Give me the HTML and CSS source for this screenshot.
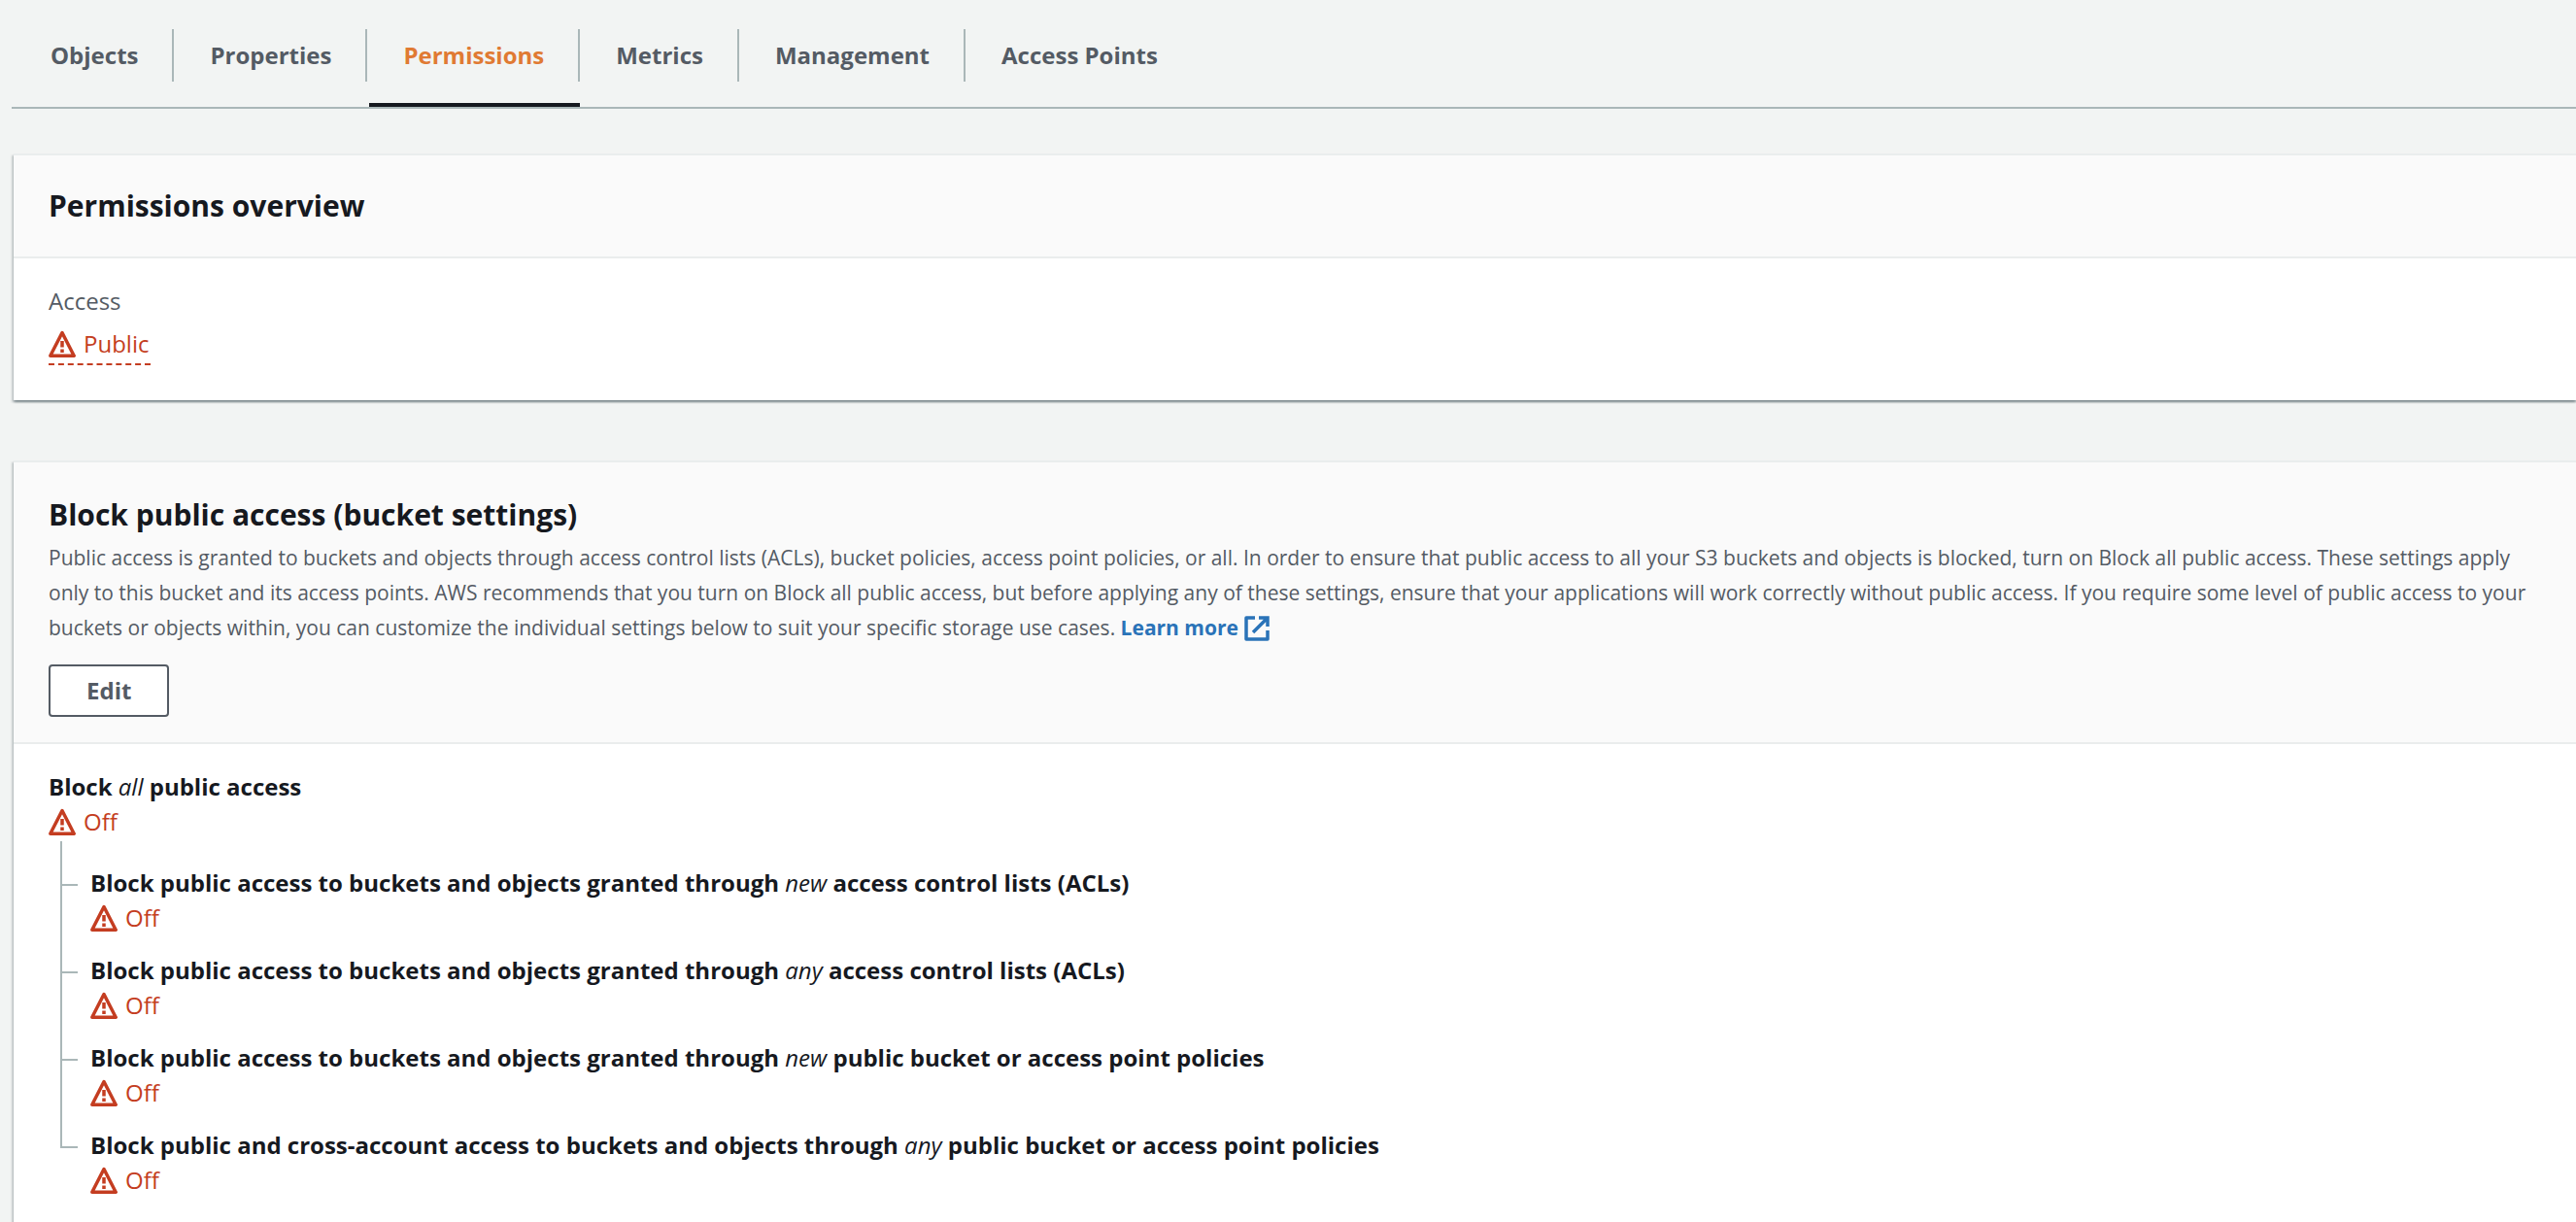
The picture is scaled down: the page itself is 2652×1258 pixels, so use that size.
FILE: index.html
```html
<!DOCTYPE html>
<html lang="en">
<head>
<meta charset="utf-8">
<meta name="viewport" content="width=device-width, initial-scale=1">
<title>Bucket permissions</title>
<link rel="stylesheet" href="styles.css">
</head>
<body>
<svg class="sprite" aria-hidden="true">
  <symbol id="icon-warning" viewBox="0 0 28 28">
    <path d="M14 2.500 L26.200 26.200 H1.800 Z" fill="none" stroke="currentColor" stroke-width="3.500" stroke-linejoin="round"/>
    <path d="M14 11v6.500M14 19.500v3.500" fill="none" stroke="currentColor" stroke-width="3.500"/>
  </symbol>
  <symbol id="icon-external" viewBox="0 0 26 26">
    <path d="M11 2H2v22h22v-9" fill="none" stroke="currentColor" stroke-width="3.500" stroke-linejoin="round"/>
    <path d="M15 2h9v9M24 2L9 17" fill="none" stroke="currentColor" stroke-width="3.500"/>
  </symbol>
</svg>

<main class="page">
  <div class="tabs" role="tablist" aria-label="Bucket sections">
    <button class="tab" type="button" role="tab" aria-selected="false"><span class="tab-label">Objects</span></button>
    <button class="tab" type="button" role="tab" aria-selected="false"><span class="tab-label">Properties</span></button>
    <button class="tab tab-active" type="button" role="tab" aria-selected="true"><span class="tab-label">Permissions</span></button>
    <button class="tab" type="button" role="tab" aria-selected="false"><span class="tab-label">Metrics</span></button>
    <button class="tab" type="button" role="tab" aria-selected="false"><span class="tab-label">Management</span></button>
    <button class="tab" type="button" role="tab" aria-selected="false"><span class="tab-label">Access Points</span></button>
  </div>

  <section class="panel">
    <header class="panel-header">
      <h2 class="panel-title">Permissions overview</h2>
    </header>
    <div class="panel-body">
      <div class="field-label">Access</div>
      <span class="status status-popover" tabindex="0"><svg class="status-icon" aria-hidden="true"><use href="#icon-warning"/></svg>Public</span>
    </div>
  </section>

  <section class="panel">
    <header class="panel-header panel-header-detailed">
      <h2 class="panel-title">Block public access (bucket settings)</h2>
      <p class="description">Public access is granted to buckets and objects through access control lists (ACLs), bucket policies, access point policies, or all. In order to ensure that public access to all your S3 buckets and objects is blocked, turn on Block all public access. These settings apply only to this bucket and its access points. AWS recommends that you turn on Block all public access, but before applying any of these settings, ensure that your applications will work correctly without public access. If you require some level of public access to your buckets or objects within, you can customize the individual settings below to suit your specific storage use cases. <a class="link" href="#learn-more">Learn more<svg class="link-icon" aria-hidden="true"><use href="#icon-external"/></svg></a></p>
      <button class="button" type="button">Edit</button>
    </header>
    <div class="panel-body">
      <h3 class="setting-title">Block <em>all</em> public access</h3>
      <div class="status"><svg class="status-icon" aria-hidden="true"><use href="#icon-warning"/></svg>Off</div>
      <ul class="tree">
        <li class="tree-item">
          <h4 class="setting-title">Block public access to buckets and objects granted through <em>new</em> access control lists (ACLs)</h4>
          <div class="status"><svg class="status-icon" aria-hidden="true"><use href="#icon-warning"/></svg>Off</div>
        </li>
        <li class="tree-item">
          <h4 class="setting-title">Block public access to buckets and objects granted through <em>any</em> access control lists (ACLs)</h4>
          <div class="status"><svg class="status-icon" aria-hidden="true"><use href="#icon-warning"/></svg>Off</div>
        </li>
        <li class="tree-item">
          <h4 class="setting-title">Block public access to buckets and objects granted through <em>new</em> public bucket or access point policies</h4>
          <div class="status"><svg class="status-icon" aria-hidden="true"><use href="#icon-warning"/></svg>Off</div>
        </li>
        <li class="tree-item">
          <h4 class="setting-title">Block public and cross-account access to buckets and objects through <em>any</em> public bucket or access point policies</h4>
          <div class="status"><svg class="status-icon" aria-hidden="true"><use href="#icon-warning"/></svg>Off</div>
        </li>
      </ul>
    </div>
  </section>
</main>
</body>
</html>
```

FILE: styles.css
```css
:root {
  --bg: #f2f4f3;
  --text: #16191f;
  --muted: #545b64;
  --line: #aab7b8;
  --divider: #eaeded;
  --error: #c43d21;
  --accent: #e07a33;
  --link: #2a73b8;
}

*,
*::before,
*::after {
  box-sizing: border-box;
}

body {
  margin: 0;
  background: var(--bg);
  color: var(--text);
  font: 400 24px/36px "Open Sans", "Noto Sans", sans-serif;
}

h2, h3, h4, p, ul {
  margin: 0;
  padding: 0;
}

.sprite {
  display: none;
}

.page {
  padding-left: 12px;
}

/* Tabs */

.tabs {
  display: flex;
  gap: 2px;
  margin-bottom: 46px;
  padding-top: 30px;
  border-bottom: 2px solid var(--line);
}

.tab {
  padding: 0 0 22px;
  border: 0;
  border-bottom: 4px solid transparent;
  background: none;
  color: var(--muted);
  font: inherit;
  font-weight: 700;
  cursor: pointer;
}

.tab-label {
  display: block;
  padding: 9px 35px;
  border-right: 2px solid var(--line);
}

.tab:first-child .tab-label {
  padding-left: 40px;
}

.tab:last-child .tab-label {
  border-right-color: transparent;
}

.tab-active {
  border-bottom-color: var(--text);
  color: var(--accent);
}

/* Panels */

.panel {
  margin: 0 0 62px 2px;
  border-top: 2px solid var(--divider);
  background: #fff;
  box-shadow:
    0 2px 2px 0 rgba(0, 28, 36, 0.3),
    2px 2px 2px 0 rgba(0, 28, 36, 0.15),
    -2px 2px 2px 0 rgba(0, 28, 36, 0.15);
}

.panel:last-child {
  margin-bottom: 0;
}

.panel-header {
  padding: 30px 36px;
  border-bottom: 2px solid var(--divider);
  background: #fafafa;
}

.panel-header-detailed {
  padding: 32px 36px 26px;
}

.panel-title {
  font-size: 30px;
  font-weight: 700;
  line-height: 44px;
}

.panel-body {
  padding: 26px 36px 36px;
}

.description {
  margin: 4px 0 20px;
  color: var(--muted);
  font-size: 21px;
}

.link {
  color: var(--link);
  font-weight: 700;
  text-decoration: none;
}

.link-icon {
  width: 26px;
  height: 26px;
  margin-left: 6px;
  vertical-align: -6px;
}

.button {
  display: block;
  height: 54px;
  padding: 0 37px;
  border: 2px solid var(--muted);
  border-radius: 4px;
  background: #fff;
  color: var(--muted);
  font: inherit;
  font-weight: 700;
  cursor: pointer;
}

.field-label {
  margin-bottom: 8px;
  color: var(--muted);
}

/* Status text with its warning icon */

.status {
  display: flex;
  align-items: center;
  gap: 8px;
  color: var(--error);
}

.status-icon {
  width: 28px;
  height: 28px;
}

.status-popover {
  width: fit-content;
  padding: 0 2px 2px 0;
  border-bottom: 2px dashed var(--error);
}

/* Settings tree */

.setting-title {
  font-size: 24px;
  font-weight: 700;
}

.setting-title em {
  font-weight: 400;
}

.tree {
  margin-top: 2px;
  list-style: none;
}

.tree-item {
  --lead: 18px;
  position: relative;
  padding: var(--lead) 0 0 43px;
}

.tree-item:first-child {
  --lead: 25px;
}

.tree-item::before {
  content: "";
  position: absolute;
  top: 0;
  left: 12px;
  width: 18px;
  height: calc(var(--lead) + 21px);
  border: solid var(--line);
  border-width: 0 0 2px 2px;
}

.tree-item:not(:last-child)::after {
  content: "";
  position: absolute;
  top: 0;
  bottom: 0;
  left: 12px;
  border-left: 2px solid var(--line);
}
```
